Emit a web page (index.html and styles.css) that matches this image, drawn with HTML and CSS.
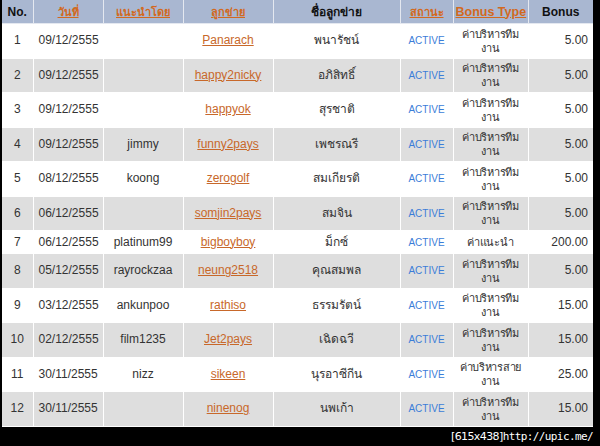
FILE: index.html
```html
<!DOCTYPE html>
<html>
<head>
<meta charset="utf-8">
<link rel="stylesheet" href="styles.css">
</head>
<body>
<div class="frame">
<table class="grid">
<colgroup>
<col class="c-no"><col class="c-date"><col class="c-ref"><col class="c-child"><col class="c-name"><col class="c-status"><col class="c-type"><col class="c-bonus">
</colgroup>
<thead>
<tr>
<th>No.</th>
<th><a href="#">วันที่</a></th>
<th><a href="#">แนะนำโดย</a></th>
<th><a href="#">ลูกข่าย</a></th>
<th>ชื่อลูกข่าย</th>
<th><a href="#">สถานะ</a></th>
<th><a href="#" class="big">Bonus Type</a></th>
<th>Bonus</th>
</tr>
</thead>
<tbody>
<tr class="tall"><td>1</td><td class="l">09/12/2555</td><td></td><td><a href="#">Panarach</a></td><td>พนารัชน์</td><td class="st">ACTIVE</td><td class="ty">ค่าบริหารทีม<br>งาน</td><td class="r">5.00</td></tr>
<tr class="tall alt"><td>2</td><td class="l">09/12/2555</td><td></td><td><a href="#">happy2nicky</a></td><td>อภิสิทธิ์</td><td class="st">ACTIVE</td><td class="ty">ค่าบริหารทีม<br>งาน</td><td class="r">5.00</td></tr>
<tr class="tall"><td>3</td><td class="l">09/12/2555</td><td></td><td><a href="#">happyok</a></td><td>สุรชาติ</td><td class="st">ACTIVE</td><td class="ty">ค่าบริหารทีม<br>งาน</td><td class="r">5.00</td></tr>
<tr class="tall alt"><td>4</td><td class="l">09/12/2555</td><td>jimmy</td><td><a href="#">funny2pays</a></td><td>เพชรณรี</td><td class="st">ACTIVE</td><td class="ty">ค่าบริหารทีม<br>งาน</td><td class="r">5.00</td></tr>
<tr class="tall"><td>5</td><td class="l">08/12/2555</td><td>koong</td><td><a href="#">zerogolf</a></td><td>สมเกียรติ</td><td class="st">ACTIVE</td><td class="ty">ค่าบริหารทีม<br>งาน</td><td class="r">5.00</td></tr>
<tr class="tall alt"><td>6</td><td class="l">06/12/2555</td><td></td><td><a href="#">somjin2pays</a></td><td>สมจิน</td><td class="st">ACTIVE</td><td class="ty">ค่าบริหารทีม<br>งาน</td><td class="r">5.00</td></tr>
<tr class="short"><td>7</td><td class="l">06/12/2555</td><td>platinum99</td><td><a href="#">bigboyboy</a></td><td>ม็กซ์</td><td class="st">ACTIVE</td><td class="ty">ค่าแนะนำ</td><td class="r">200.00</td></tr>
<tr class="tall alt"><td>8</td><td class="l">05/12/2555</td><td>rayrockzaa</td><td><a href="#">neung2518</a></td><td>คุณสมพล</td><td class="st">ACTIVE</td><td class="ty">ค่าบริหารทีม<br>งาน</td><td class="r">5.00</td></tr>
<tr class="tall"><td>9</td><td class="l">03/12/2555</td><td>ankunpoo</td><td><a href="#">rathiso</a></td><td>ธรรมรัตน์</td><td class="st">ACTIVE</td><td class="ty">ค่าบริหารทีม<br>งาน</td><td class="r">15.00</td></tr>
<tr class="tall alt"><td>10</td><td class="l">02/12/2555</td><td>film1235</td><td><a href="#">Jet2pays</a></td><td>เฉิดฉวี</td><td class="st">ACTIVE</td><td class="ty">ค่าบริหารทีม<br>งาน</td><td class="r">15.00</td></tr>
<tr class="tall"><td>11</td><td class="l">30/11/2555</td><td>nizz</td><td><a href="#">sikeen</a></td><td>นุรอาซีกีน</td><td class="st">ACTIVE</td><td class="ty">ค่าบริหารสาย<br>งาน</td><td class="r">25.00</td></tr>
<tr class="tall alt"><td>12</td><td class="l">30/11/2555</td><td></td><td><a href="#">ninenog</a></td><td>นพเก้า</td><td class="st">ACTIVE</td><td class="ty">ค่าบริหารทีม<br>งาน</td><td class="r">15.00</td></tr>
</tbody>
</table>
<div class="stamp"><span class="dim">[615x438]</span>http://upic.me/</div>
</div>
</body>
</html>
```
FILE: styles.css
```css
html, body {
  margin: 0;
  padding: 0;
  background: #000;
}
.frame {
  width: 600px;
  height: 446px;
  padding-left: 2px;
  box-sizing: border-box;
  overflow: hidden;
}
.grid {
  width: 591px;
  border-collapse: collapse;
  table-layout: fixed;
  background: #fff;
  font-family: "Liberation Sans", Arial, "Noto Sans", sans-serif;
  font-size: 12px;
  color: #333;
}
.c-no { width: 31px; }
.c-date { width: 70px; }
.c-ref { width: 80px; }
.c-child { width: 90px; }
.c-name { width: 127px; }
.c-status { width: 53px; }
.c-type { width: 75px; }
.c-bonus { width: 65px; }
.grid th {
  background: #a9b7d1;
  height: 23px;
  padding: 0 2px;
  font-weight: bold;
  color: #111;
  font-size: 12px;
  line-height: 14px;
  border: 1px solid #e4e8f0;
  border-top: none;
  text-align: center;
  white-space: nowrap;
  overflow: hidden;
}
.grid th:first-child { border-left: none; }
.grid th:last-child { border-right: none; }
.grid th a {
  color: #d2691e;
  font-size: 11px;
}
.grid th a.big { font-size: 12.5px; }
.grid td {
  padding: 1px 5px;
  line-height: 15px;
  text-align: center;
  vertical-align: middle;
  border: 1px solid #fff;
  border-top: none;
  white-space: nowrap;
  overflow: hidden;
}
.grid td:first-child { border-left: none; }
.grid td:last-child { border-right: none; }
.grid td.l { text-align: left; }
.grid td.r { text-align: right; }
.grid td.st {
  color: #3b7dd8;
  font-size: 10px;
}
.grid td.ty {
  padding: 1px 0;
  font-size: 11px;
  line-height: 14px;
  letter-spacing: -0.3px;
}
.grid td a {
  color: #c8682a;
}
.tall td { height: 31.5px; }
.short td { height: 20px; }
.alt td { background: #dedede; }
.stamp {
  color: #fff;
  text-align: right;
  padding-right: 7px;
  margin-top: 2px;
  font-family: "DejaVu Sans Mono", monospace;
  font-size: 11px;
  letter-spacing: -0.6px;
  line-height: 16px;
}
.stamp .dim { font-family: "DejaVu Sans", sans-serif; }
```
